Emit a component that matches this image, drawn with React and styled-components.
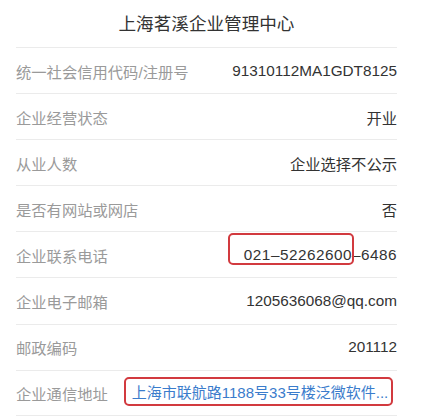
import React from 'react';
import styled, { createGlobalStyle } from 'styled-components';

const GlobalStyle = createGlobalStyle`
  body {
    margin: 0;
    background: #fff;
    font-family: "Helvetica Neue", "Liberation Sans", "Noto Sans CJK SC", sans-serif;
  }
`;

const Panel = styled.div`
  width: 381px;
  margin-left: 16px;
`;

const Title = styled.div`
  height: 47px;
  display: flex;
  align-items: center;
  justify-content: center;
  font-size: 17.6px;
  color: #333;
  padding-bottom: 3px;
  box-sizing: border-box;
`;

const Row = styled.div`
  height: 46.1px;
  box-sizing: border-box;
  border-top: 1px solid #ebebeb;
  border-bottom: ${(p) => (p.$last ? '1px solid #ebebeb' : 'none')};
  display: flex;
  align-items: center;
  justify-content: space-between;
  font-size: 15.3px;
`;

const Label = styled.span`
  color: #9a9a9a;
  white-space: nowrap;
  flex-shrink: 0;
`;

const Value = styled.span`
  color: #333;
  white-space: nowrap;
  text-align: right;
  letter-spacing: ${(p) => (p.$wide ? '0.5px' : 'normal')};
`;

const Marked = styled.span`
  position: relative;

  &::after {
    content: '';
    position: absolute;
    left: -16px;
    right: -2px;
    top: -13px;
    bottom: -2px;
    border: 2px solid #d23a3f;
    border-radius: 5px;
  }
`;

const AddressBox = styled.div`
  flex: 1;
  min-width: 0;
  margin: 0 4px 3px 16px;
  height: 29px;
  box-sizing: border-box;
  border: 2px solid #d23a3f;
  border-radius: 5px;
  display: flex;
  align-items: center;
  padding: 0 0 0 6px;
  overflow: hidden;
`;

const Link = styled.span`
  color: #3a7ccc;
  font-size: 15px;
  white-space: nowrap;
`;

const rows = [
  ['统一社会信用代码/注册号', '91310112MA1GDT8125'],
  ['企业经营状态', '开业'],
  ['从业人数', '企业选择不公示'],
  ['是否有网站或网店', '否'],
];

const rowsAfter = [
  ['企业电子邮箱', '1205636068@qq.com'],
  ['邮政编码', '201112'],
];

export default function App() {
  return (
    <>
      <GlobalStyle />
      <Panel>
        <Title>上海茗溪企业管理中心</Title>
        {rows.map(([label, value]) => (
          <Row key={label}>
            <Label>{label}</Label>
            <Value>{value}</Value>
          </Row>
        ))}
        <Row>
          <Label>企业联系电话</Label>
          <Value $wide>
            <Marked>021–52262600</Marked>–6486
          </Value>
        </Row>
        {rowsAfter.map(([label, value]) => (
          <Row key={label}>
            <Label>{label}</Label>
            <Value>{value}</Value>
          </Row>
        ))}
        <Row $last>
          <Label>企业通信地址</Label>
          <AddressBox>
            <Link>上海市联航路1188号33号楼泛微软件...</Link>
          </AddressBox>
        </Row>
      </Panel>
    </>
  );
}
